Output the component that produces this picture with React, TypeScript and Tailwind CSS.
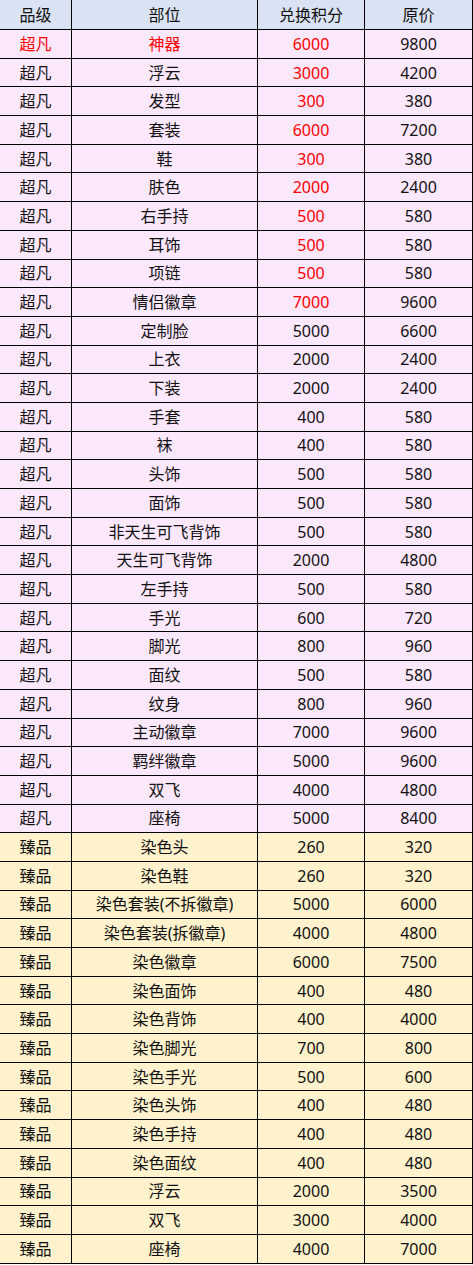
type Row = {
  grade: string;
  part: string;
  points: number;
  price: number;
  redAll?: boolean;
  redPoints?: boolean;
};

const SUPER: Row[] = [
  { grade: "超凡", part: "神器", points: 6000, price: 9800, redAll: true },
  { grade: "超凡", part: "浮云", points: 3000, price: 4200, redPoints: true },
  { grade: "超凡", part: "发型", points: 300, price: 380, redPoints: true },
  { grade: "超凡", part: "套装", points: 6000, price: 7200, redPoints: true },
  { grade: "超凡", part: "鞋", points: 300, price: 380, redPoints: true },
  { grade: "超凡", part: "肤色", points: 2000, price: 2400, redPoints: true },
  { grade: "超凡", part: "右手持", points: 500, price: 580, redPoints: true },
  { grade: "超凡", part: "耳饰", points: 500, price: 580, redPoints: true },
  { grade: "超凡", part: "项链", points: 500, price: 580, redPoints: true },
  { grade: "超凡", part: "情侣徽章", points: 7000, price: 9600, redPoints: true },
  { grade: "超凡", part: "定制脸", points: 5000, price: 6600 },
  { grade: "超凡", part: "上衣", points: 2000, price: 2400 },
  { grade: "超凡", part: "下装", points: 2000, price: 2400 },
  { grade: "超凡", part: "手套", points: 400, price: 580 },
  { grade: "超凡", part: "袜", points: 400, price: 580 },
  { grade: "超凡", part: "头饰", points: 500, price: 580 },
  { grade: "超凡", part: "面饰", points: 500, price: 580 },
  { grade: "超凡", part: "非天生可飞背饰", points: 500, price: 580 },
  { grade: "超凡", part: "天生可飞背饰", points: 2000, price: 4800 },
  { grade: "超凡", part: "左手持", points: 500, price: 580 },
  { grade: "超凡", part: "手光", points: 600, price: 720 },
  { grade: "超凡", part: "脚光", points: 800, price: 960 },
  { grade: "超凡", part: "面纹", points: 500, price: 580 },
  { grade: "超凡", part: "纹身", points: 800, price: 960 },
  { grade: "超凡", part: "主动徽章", points: 7000, price: 9600 },
  { grade: "超凡", part: "羁绊徽章", points: 5000, price: 9600 },
  { grade: "超凡", part: "双飞", points: 4000, price: 4800 },
  { grade: "超凡", part: "座椅", points: 5000, price: 8400 },
];

const PREMIUM: Row[] = [
  { grade: "臻品", part: "染色头", points: 260, price: 320 },
  { grade: "臻品", part: "染色鞋", points: 260, price: 320 },
  { grade: "臻品", part: "染色套装(不拆徽章)", points: 5000, price: 6000 },
  { grade: "臻品", part: "染色套装(拆徽章)", points: 4000, price: 4800 },
  { grade: "臻品", part: "染色徽章", points: 6000, price: 7500 },
  { grade: "臻品", part: "染色面饰", points: 400, price: 480 },
  { grade: "臻品", part: "染色背饰", points: 400, price: 4000 },
  { grade: "臻品", part: "染色脚光", points: 700, price: 800 },
  { grade: "臻品", part: "染色手光", points: 500, price: 600 },
  { grade: "臻品", part: "染色头饰", points: 400, price: 480 },
  { grade: "臻品", part: "染色手持", points: 400, price: 480 },
  { grade: "臻品", part: "染色面纹", points: 400, price: 480 },
  { grade: "臻品", part: "浮云", points: 2000, price: 3500 },
  { grade: "臻品", part: "双飞", points: 3000, price: 4000 },
  { grade: "臻品", part: "座椅", points: 4000, price: 7000 },
];

// widths include the 1px right border
const cell = "flex items-center justify-center border-r border-black";

function TableRow({ row, bg }: { row: Row; bg: string }) {
  const red = "text-[#ff0000]";
  const ink = "text-[#111]";
  return (
    <div className={`flex h-[28.7px] border-b border-black ${bg}`}>
      <div className={`${cell} w-[72px] ${row.redAll ? red : ink}`}>{row.grade}</div>
      <div className={`${cell} w-[186px] ${row.redAll ? red : ink}`}>{row.part}</div>
      <div className={`${cell} w-[107px] ${row.redAll || row.redPoints ? red : ink}`}>{row.points}</div>
      <div className={`${cell} w-[108px] ${ink}`}>{row.price}</div>
    </div>
  );
}

export default function App() {
  return (
    <div
      className="w-[473px] bg-white text-[16px] leading-none"
      style={{ fontFamily: '"Noto Sans", "Noto Sans CJK SC", sans-serif' }}
    >
      <div className="flex h-[30px] border-b border-black bg-[#dae3f3] text-[#111]">
        <div className={`${cell} w-[72px]`}>品级</div>
        <div className={`${cell} w-[186px]`}>部位</div>
        <div className={`${cell} w-[107px]`}>兑换积分</div>
        <div className={`${cell} w-[108px]`}>原价</div>
      </div>
      {SUPER.map((r, i) => (
        <TableRow key={"s" + i} row={r} bg="bg-[#fce8fc]" />
      ))}
      {PREMIUM.map((r, i) => (
        <TableRow key={"p" + i} row={r} bg="bg-[#fff2cc]" />
      ))}
    </div>
  );
}
